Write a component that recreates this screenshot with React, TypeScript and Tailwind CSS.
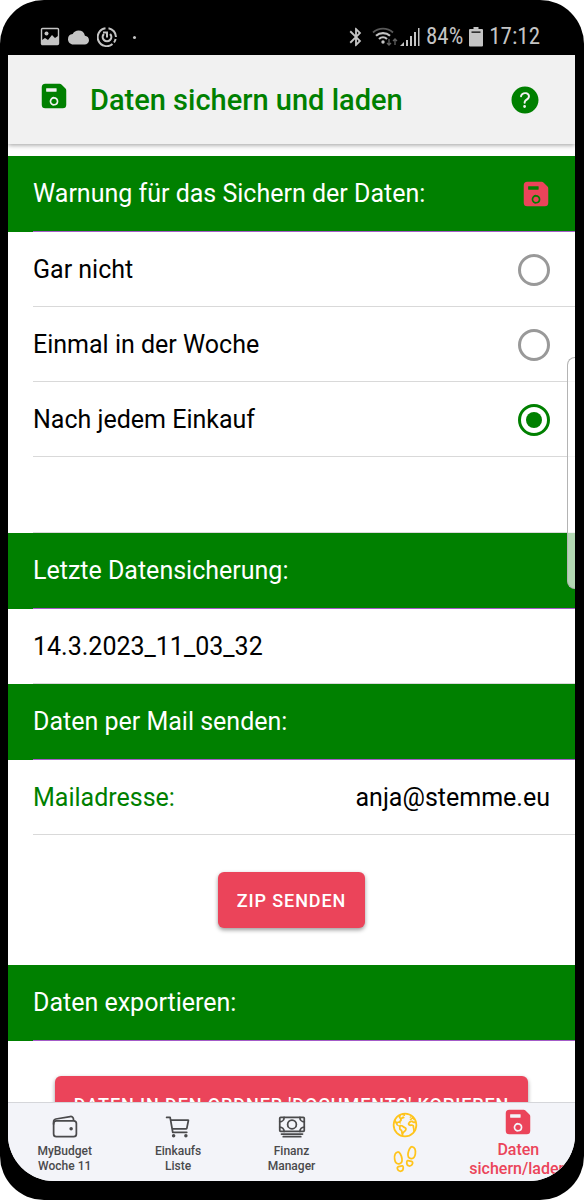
import { useState } from "react";
import type { ReactNode } from "react";
import {
  IoCartOutline,
  IoCashOutline,
  IoEarthOutline,
  IoFootstepsOutline,
  IoHelpCircle,
  IoSave,
  IoWalletOutline,
} from "react-icons/io5";
import { MdBluetooth, MdCloud } from "react-icons/md";

function PictureIcon() {
  return (
    <svg viewBox="0 0 20 20" className="h-5 w-5" fill="none" aria-hidden="true">
      <rect x="1.5" y="1.5" width="17" height="16" rx="1" stroke="currentColor" strokeWidth="1.4" />
      <circle cx="6.5" cy="6.5" r="2" fill="currentColor" />
      <path d="M2 17v-4l3-2 3 2 4-5 3 3 3-2v8z" fill="currentColor" />
    </svg>
  );
}

function PowerRingIcon() {
  return (
    <svg viewBox="0 0 20 20" className="h-5 w-5" fill="none" stroke="currentColor" aria-hidden="true">
      <path d="M8.500 1.200A9 9 0 1 0 15.500 17M17 15.500A9 9 0 0 0 18.600 12M19 10A9 9 0 0 0 11.500 1.200" strokeWidth="2" />
      <path d="M6.900 6.900a4.300 4.300 0 1 0 6.200 0" strokeWidth="2.200" />
      <path d="M6 5.500h4v5" strokeWidth="2" />
    </svg>
  );
}

function WifiIcon() {
  return (
    <svg viewBox="0 0 26 20" className="h-5 w-[26px]" fill="none" stroke="currentColor" aria-hidden="true">
      <path d="M1 5.500a15 15 0 0 1 20 0" strokeWidth="1.800" opacity=".45" />
      <path d="M4 8.800a10.500 10.500 0 0 1 14 0M7 12a6 6 0 0 1 8 0" strokeWidth="2.200" />
      <circle cx="11" cy="15" r="1.700" fill="currentColor" stroke="none" />
      <path d="M17 12v6m-2-2 2 2 2-2M23 18v-6m-2 2 2-2 2 2" strokeWidth="1.300" opacity=".5" />
    </svg>
  );
}

function SignalIcon() {
  return (
    <svg viewBox="0 0 20 20" className="h-5 w-5" fill="currentColor" aria-hidden="true">
      <path d="M0 19l4-4v4zM6 13h2v6H6zM10 9h2v10h-2zM14 5h2v14h-2zM18 1h1.500v18H18z" />
    </svg>
  );
}

function BatteryIcon() {
  return (
    <svg viewBox="0 0 14 20" className="h-5 w-[14px]" fill="currentColor" aria-hidden="true">
      <path fillRule="evenodd" d="M4.500 0h5v2H13a1 1 0 0 1 1 1v15.500a1 1 0 0 1-1 1H1a1 1 0 0 1-1-1V3a1 1 0 0 1 1-1h3.500zM2.500 4.500v1.200h9V4.500z" />
    </svg>
  );
}

function SectionHeader({ children, icon }: { children: ReactNode; icon?: ReactNode }) {
  return (
    <div className="bg-[#008000] pl-[25px]">
      <h2 className="flex h-[76px] items-center justify-between border-b border-[#a45cc8] pr-[25px] text-[25px] text-white">
        {children}
        {icon}
      </h2>
    </div>
  );
}

const rowClass =
  "ml-[25px] flex h-[75px] items-center justify-between border-b border-[#d9d9d9] pt-[2px] pr-[25px] text-[25px] text-black";

const options = ["Gar nicht", "Einmal in der Woche", "Nach jedem Einkauf"];

function StatusBar() {
  return (
    <div className="flex h-[55px] shrink-0 items-end justify-between pr-[35px] pb-[7px] pl-8 text-[#c4c4c4]">
      <div className="flex h-[22px] items-center gap-2">
        <PictureIcon />
        <MdCloud className="h-[21px] w-[21px]" />
        <PowerRingIcon />
        <span className="ml-2 h-[3px] w-[3px] rounded-full bg-current" />
      </div>
      <div className="flex h-[22px] items-center font-['Roboto_Condensed','Roboto',sans-serif] text-[23px]">
        <MdBluetooth className="mr-[5px] h-[22px] w-[22px]" />
        <WifiIcon />
        <span className="ml-[2px]"><SignalIcon /></span>
        <span className="mr-[6px] ml-[6px]">84%</span>
        <BatteryIcon />
        <span className="ml-[6px]">17:12</span>
      </div>
    </div>
  );
}

function Tab({ icon, lines }: { icon: ReactNode; lines: string[] }) {
  return (
    <button type="button" className="flex flex-1 flex-col items-center pt-[10px] text-[12px] leading-[15px] font-medium text-[#4a4a4c]">
      {icon}
      <span className="mt-[3px]">
        {lines.map((line) => (
          <span key={line} className="block">{line}</span>
        ))}
      </span>
    </button>
  );
}

export default function App() {
  const [choice, setChoice] = useState(options[2]);

  return (
    <div className="h-screen bg-white font-[Roboto,sans-serif]">
      <div className="relative flex h-full flex-col overflow-hidden rounded-[44px] bg-black pr-[9px] pb-[19px] pl-2">
        <StatusBar />
        <div className="flex min-h-0 flex-1 flex-col overflow-hidden rounded-b-[46px] bg-white">
          <header className="z-10 flex h-[89px] shrink-0 items-center bg-[#f1f1f1] pr-8 pl-8 text-[#008000] shadow-[0_1px_5px_rgba(0,0,0,0.4)]">
            <IoSave className="mb-2 h-7 w-7" />
            <h1 className="mt-[3px] ml-[22px] flex-1 text-[29px] font-medium">Daten sichern und laden</h1>
            <button type="button" aria-label="Hilfe">
              <IoHelpCircle className="h-9 w-9" />
            </button>
          </header>

          <main className="min-h-0 flex-1 overflow-hidden pt-3">
            <SectionHeader icon={<IoSave className="h-7 w-7 text-[#eb445a]" />}>
              Warnung für das Sichern der Daten:
            </SectionHeader>
            {options.map((option) => (
              <label key={option} className={rowClass}>
                {option}
                <input
                  type="radio"
                  name="warning"
                  checked={choice === option}
                  onChange={() => setChoice(option)}
                  className="h-8 w-8 appearance-none rounded-full border-3 border-[#999999] bg-white bg-clip-content p-[5px] checked:border-[#008000] checked:bg-[#008000]"
                />
              </label>
            ))}
            <div className="ml-[25px] h-[76px] border-b border-[#d9d9d9]" />

            <SectionHeader>Letzte Datensicherung:</SectionHeader>
            <div className={rowClass}>14.3.2023_11_03_32</div>

            <SectionHeader>Daten per Mail senden:</SectionHeader>
            <div className={rowClass}>
              <label htmlFor="mail" className="text-[#008000]">Mailadresse:</label>
              <input
                id="mail"
                type="email"
                defaultValue="anja@stemme.eu"
                className="min-w-0 flex-1 bg-transparent text-right outline-none"
              />
            </div>
            <div className="flex h-[130px] items-center justify-center">
              <button type="button" className="h-14 rounded-[6px] bg-[#eb445a] px-[19px] text-[18px] font-medium tracking-wider text-white shadow-[0_2px_4px_rgba(0,0,0,0.4)]">
                ZIP SENDEN
              </button>
            </div>

            <SectionHeader>Daten exportieren:</SectionHeader>
            <div className="flex justify-center pt-[35px]">
              <button type="button" className="h-14 rounded-[6px] bg-[#eb445a] px-[19px] text-[18px] font-medium tracking-wider whitespace-nowrap text-white shadow-[0_2px_4px_rgba(0,0,0,0.4)]">
                DATEN IN DEN ORDNER 'DOCUMENTS' KOPIEREN
              </button>
            </div>
          </main>

          <nav className="z-10 flex h-[79px] shrink-0 border-t border-[#d5d6da] bg-[#f3f4f9]">
            <Tab icon={<IoWalletOutline className="h-7 w-7" />} lines={["MyBudget", "Woche 11"]} />
            <Tab icon={<IoCartOutline className="h-7 w-7" />} lines={["Einkaufs", "Liste"]} />
            <Tab icon={<IoCashOutline className="h-7 w-7" />} lines={["Finanz", "Manager"]} />
            <button type="button" aria-label="Welt und Schritte" className="flex flex-1 flex-col items-center gap-[6px] pt-2 text-[#ffc41c]">
              <IoEarthOutline className="h-7 w-7" />
              <IoFootstepsOutline className="h-7 w-7" />
            </button>
            <button type="button" className="flex min-w-0 flex-1 flex-col items-center pt-[5px] text-[16px] leading-[19px] font-medium text-[#eb445a]">
              <IoSave className="h-7 w-7 shrink-0" />
              <span className="mt-1">Daten</span>
              <span>sichern/laden</span>
            </button>
          </nav>
        </div>
        <div className="absolute top-[357px] right-[9px] h-[232px] w-2 rounded-l-[10px] border border-r-0 border-[#b4b4b4] bg-white/70" />
      </div>
    </div>
  );
}
